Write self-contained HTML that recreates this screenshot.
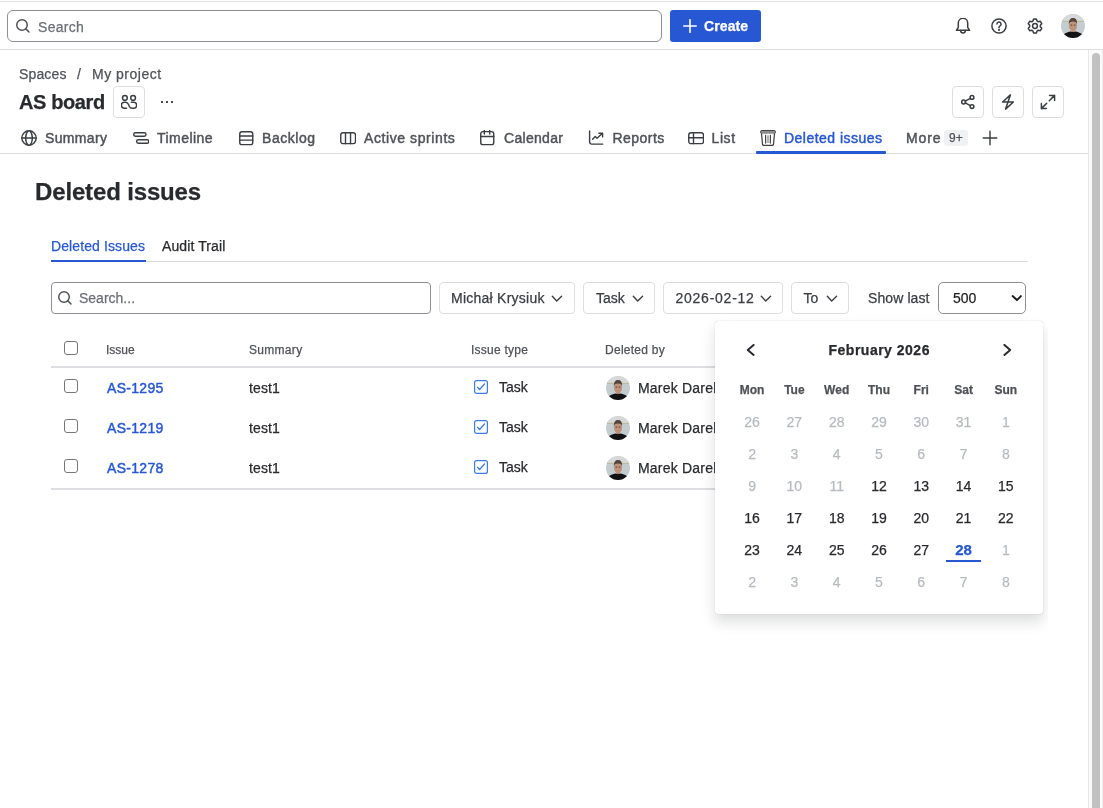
<!DOCTYPE html>
<html><head><meta charset="utf-8"><style>
html,body{margin:0;padding:0;background:#fff;width:1103px;height:808px;overflow:hidden;position:relative;font-family:"Liberation Sans", sans-serif}
.t{position:absolute;white-space:nowrap;font-family:"Liberation Sans", sans-serif}
svg{display:block}
</style></head><body>
<div id="root" style="position:absolute;left:0;top:0;width:1103px;height:808px;will-change:transform">
<div style="position:absolute;left:0px;top:1px;width:1103px;height:1px;background:#e1e3e1"></div>
<div style="position:absolute;left:0px;top:49px;width:1103px;height:1px;background:#dddee1"></div>
<div style="position:absolute;left:7px;top:10px;width:655px;height:32px;box-sizing:border-box;border:1px solid #8c8f97;border-radius:6px"></div>
<svg style="position:absolute;left:14px;top:17px;" width="16" height="16" viewBox="0 0 16 16" fill="none" stroke="#505258" stroke-width="1.5" stroke-linecap="round" stroke-linejoin="round"><circle cx="8" cy="8" r="5.25"/><path d="M11.9 11.9 L15 15"/></svg>
<div class="t" style="left:38px;top:16.0px;font-size:14px;line-height:22px;font-weight:400;color:#6b6e76;letter-spacing:0.3px;-webkit-text-stroke:0.25px #6b6e76;">Search</div>
<div style="position:absolute;left:670px;top:10px;width:91px;height:32px;background:#2857d4;border-radius:3px"></div>
<svg style="position:absolute;left:683px;top:19px;" width="14" height="14" viewBox="0 0 14 14" fill="none" stroke="#fff" stroke-width="1.6" stroke-linecap="round" stroke-linejoin="round"><path d="M7 0.75V13.25M0.75 7H13.25"/></svg>
<div class="t" style="left:704px;top:15.0px;font-size:14px;line-height:22px;font-weight:700;color:#fff;letter-spacing:0.1px;-webkit-text-stroke:0.25px #fff;">Create</div>
<svg style="position:absolute;left:955px;top:18px;" width="16" height="16" viewBox="0 0 16 16" fill="none" stroke="#3b3d42" stroke-width="1.5" stroke-linecap="round" stroke-linejoin="round"><path d="M3.3 9.4V5a4.7 4.7 0 0 1 9.4 0v4.4l1.9 2.9H1.4z"/><path d="M5.6 12.5a2.4 2.4 0 0 0 4.8 0"/></svg>
<svg style="position:absolute;left:991px;top:18px;" width="16" height="16" viewBox="0 0 16 16" fill="none" stroke="#3b3d42" stroke-width="1.5" stroke-linecap="round" stroke-linejoin="round"><circle cx="8" cy="8" r="7.1"/><path d="M5.9 6.1a2.1 2.1 0 1 1 3.1 1.85c-.6.35-1 .8-1 1.5v.4"/><circle cx="8" cy="11.9" r=".35" fill="#3b3d42"/></svg>
<svg style="position:absolute;left:1027px;top:18px;" width="16" height="16" viewBox="0 0 16 16" fill="none" stroke="#3b3d42" stroke-width="1.5" stroke-linecap="round" stroke-linejoin="round"><path d="M6.6 1h2.8l.7 2.1 1.1.65 2.15-.45 1.4 2.4-1.45 1.65v1.3l1.45 1.65-1.4 2.4-2.15-.45-1.1.65L9.4 15H6.6l-.7-2.1-1.1-.65-2.15.45-1.4-2.4L2.7 8.65v-1.3L1.25 5.7l1.4-2.4 2.15.45 1.1-.65z"/><circle cx="8" cy="8" r="2.4"/></svg>
<svg style="position:absolute;left:1061px;top:14px" width="24" height="24" viewBox="0 0 24 24">
<defs><clipPath id="ch"><circle cx="12" cy="12" r="12"/></clipPath></defs>
<g clip-path="url(#ch)">
<rect width="24" height="24" fill="#c3cdd0"/>
<rect width="24" height="7.3" fill="#d6d9d9"/>
<rect y="6.9" width="24" height="0.7" fill="#b8ab7e"/>
<path d="M1 24 C2 19.6 6 18.2 9.5 17.6 H14.5 C18 18.2 22 19.6 23 24Z" fill="#121214"/>
<rect x="10" y="15" width="4" height="3" fill="#b08671"/>
<ellipse cx="12" cy="11.7" rx="4.1" ry="5.4" fill="#bf927c"/>
<path d="M7.9 10.6 C7.5 5.6 9.8 4.1 12 4.1 C14.4 4.1 16.5 5.4 16.1 10.6 C15.6 8.1 14.2 7.5 12 7.5 C9.8 7.5 8.4 8.1 7.9 10.6Z" fill="#57443a"/>
<rect x="9.6" y="10.6" width="1.6" height=".9" fill="#4e3a30"/><rect x="12.8" y="10.6" width="1.6" height=".9" fill="#4e3a30"/>
</g></svg>
<div style="position:absolute;left:1088px;top:50px;width:1px;height:758px;background:#e8e8e8"></div>
<div style="position:absolute;left:1089px;top:50px;width:14px;height:758px;background:#fafafa"></div>
<div style="position:absolute;left:1102px;top:50px;width:1px;height:758px;background:#efefef"></div>
<div style="position:absolute;left:1092px;top:53px;width:8px;height:800px;background:#c1c1c1;border-radius:4px"></div>
<div class="t" style="left:19px;top:63.0px;font-size:14px;line-height:22px;font-weight:400;color:#505258;letter-spacing:0.15px;-webkit-text-stroke:0.25px #505258;">Spaces</div>
<div class="t" style="left:77px;top:63.0px;font-size:14px;line-height:22px;font-weight:400;color:#505258;letter-spacing:0px;-webkit-text-stroke:0.25px #505258;">/</div>
<div class="t" style="left:92px;top:63.0px;font-size:14px;line-height:22px;font-weight:400;color:#505258;letter-spacing:0.5px;-webkit-text-stroke:0.25px #505258;">My project</div>
<div class="t" style="left:19px;top:88.0px;font-size:20px;line-height:28px;font-weight:700;color:#292a2e;letter-spacing:-0.4px;-webkit-text-stroke:0.25px #292a2e;">AS board</div>
<div style="position:absolute;left:113px;top:86px;width:32px;height:32px;box-sizing:border-box;border:1px solid #dddee1;border-radius:4px"></div>
<svg style="position:absolute;left:121px;top:94px;" width="16" height="16" viewBox="0 0 16 16" fill="none" stroke="#3b3d42" stroke-width="1.5" stroke-linecap="round" stroke-linejoin="round"><circle cx="3.9" cy="3.9" r="2.35"/><circle cx="12.1" cy="3.9" r="2.35"/><path d="M5.5 14.25H3.3a2.95 2.95 0 0 1 0-5.9h1.2c1.5 0 2.4.7 3 2.1l.9 2c.55 1.2 1.3 1.8 2.6 1.8h1.7a2.95 2.95 0 0 0 0-5.9H10.4"/></svg>
<div style="position:absolute;left:161px;top:101px;width:2px;height:2px;background:#3b3d42;border-radius:.5px"></div>
<div style="position:absolute;left:166px;top:101px;width:2px;height:2px;background:#3b3d42;border-radius:.5px"></div>
<div style="position:absolute;left:171px;top:101px;width:2px;height:2px;background:#3b3d42;border-radius:.5px"></div>
<div style="position:absolute;left:952px;top:86px;width:32px;height:32px;box-sizing:border-box;border:1px solid #dddee1;border-radius:4px"></div>
<div style="position:absolute;left:992px;top:86px;width:32px;height:32px;box-sizing:border-box;border:1px solid #dddee1;border-radius:4px"></div>
<div style="position:absolute;left:1032px;top:86px;width:32px;height:32px;box-sizing:border-box;border:1px solid #dddee1;border-radius:4px"></div>
<svg style="position:absolute;left:960px;top:94px;" width="16" height="16" viewBox="0 0 16 16" fill="none" stroke="#3b3d42" stroke-width="1.5" stroke-linecap="round" stroke-linejoin="round"><circle cx="3.6" cy="8" r="1.9"/><circle cx="12" cy="3.4" r="1.9"/><circle cx="12" cy="12.6" r="1.9"/><path d="M5.3 7.05L10.3 4.35M5.3 8.95L10.3 11.65"/></svg>
<svg style="position:absolute;left:1000px;top:94px;" width="16" height="16" viewBox="0 0 16 16" fill="none" stroke="#3b3d42" stroke-width="1.5" stroke-linecap="round" stroke-linejoin="round"><path d="M10.4 0.9L2.6 8H13.4L5.6 15.1Z"/></svg>
<svg style="position:absolute;left:1040px;top:94px;" width="16" height="16" viewBox="0 0 16 16" fill="none" stroke="#3b3d42" stroke-width="1.5" stroke-linecap="round" stroke-linejoin="round"><path d="M9.6 1.4H14.6V6.4M14.6 1.4L9.3 6.7M6.4 14.6H1.4V9.6M1.4 14.6L6.7 9.3"/></svg>
<div style="position:absolute;left:0px;top:153px;width:1088px;height:1px;background:#dddee1"></div>
<svg style="position:absolute;left:21px;top:130px;" width="16" height="16" viewBox="0 0 16 16" fill="none" stroke="#3b3d42" stroke-width="1.4" stroke-linecap="round" stroke-linejoin="round"><circle cx="8" cy="8" r="7.2"/><path d="M7 0.9C3.9 4 3.9 12 7 15.1M9 0.9C12.1 4 12.1 12 9 15.1M0.8 8H15.2"/></svg>
<div class="t" style="left:45px;top:127.0px;font-size:14px;line-height:22px;font-weight:400;color:#505258;letter-spacing:0.35px;-webkit-text-stroke:0.45px #505258;">Summary</div>
<svg style="position:absolute;left:133px;top:130px;" width="16" height="16" viewBox="0 0 16 16" fill="none" stroke="#3b3d42" stroke-width="1.4" stroke-linecap="round" stroke-linejoin="round"><rect x="0.75" y="2.8" width="12.25" height="3.5" rx="1.75"/><rect x="3.6" y="9.8" width="12.25" height="3.5" rx="1.75"/></svg>
<div class="t" style="left:157px;top:127.0px;font-size:14px;line-height:22px;font-weight:400;color:#505258;letter-spacing:0.457px;-webkit-text-stroke:0.45px #505258;">Timeline</div>
<svg style="position:absolute;left:238px;top:130px;" width="16" height="16" viewBox="0 0 16 16" fill="none" stroke="#3b3d42" stroke-width="1.4" stroke-linecap="round" stroke-linejoin="round"><rect x="1.75" y="1.75" width="13" height="12.9" rx="2.2"/><path d="M1.75 6H14.75M1.75 10.1H14.75"/></svg>
<div class="t" style="left:262px;top:127.0px;font-size:14px;line-height:22px;font-weight:400;color:#505258;letter-spacing:0.55px;-webkit-text-stroke:0.45px #505258;">Backlog</div>
<svg style="position:absolute;left:340px;top:130px;" width="16" height="16" viewBox="0 0 16 16" fill="none" stroke="#3b3d42" stroke-width="1.4" stroke-linecap="round" stroke-linejoin="round"><rect x="0.75" y="2.75" width="14.75" height="10.9" rx="2.2"/><path d="M5.5 2.75V13.65M10.55 2.75V13.65"/></svg>
<div class="t" style="left:364px;top:127.0px;font-size:14px;line-height:22px;font-weight:400;color:#505258;letter-spacing:0.585px;-webkit-text-stroke:0.45px #505258;">Active sprints</div>
<svg style="position:absolute;left:479px;top:130px;" width="16" height="16" viewBox="0 0 16 16" fill="none" stroke="#3b3d42" stroke-width="1.4" stroke-linecap="round" stroke-linejoin="round"><rect x="1.75" y="1.6" width="13" height="13" rx="2.2"/><path d="M1.75 6.5H14.75M5.3 0.4V4.1M10.7 0.4V4.1"/></svg>
<div class="t" style="left:504px;top:127.0px;font-size:14px;line-height:22px;font-weight:400;color:#505258;letter-spacing:0.3px;-webkit-text-stroke:0.45px #505258;">Calendar</div>
<svg style="position:absolute;left:588px;top:130px;" width="16" height="16" viewBox="0 0 16 16" fill="none" stroke="#3b3d42" stroke-width="1.4" stroke-linecap="round" stroke-linejoin="round"><path d="M1.6 1V12.1a2 2 0 0 0 2 2H14.8"/><path d="M4.6 9.2L7.2 6.5L9 8.2L14 3.7M10.9 3.2H14.6V6.9"/></svg>
<div class="t" style="left:612.5px;top:127.0px;font-size:14px;line-height:22px;font-weight:400;color:#505258;letter-spacing:0.467px;-webkit-text-stroke:0.45px #505258;">Reports</div>
<svg style="position:absolute;left:688px;top:130px;" width="16" height="16" viewBox="0 0 16 16" fill="none" stroke="#3b3d42" stroke-width="1.4" stroke-linecap="round" stroke-linejoin="round"><rect x="0.75" y="2.75" width="14.75" height="10.9" rx="2.2"/><path d="M0.75 7.7H15.5M5.5 2.75V13.65"/></svg>
<div class="t" style="left:711.5px;top:127.0px;font-size:14px;line-height:22px;font-weight:400;color:#505258;letter-spacing:0.6px;-webkit-text-stroke:0.45px #505258;">List</div>
<svg style="position:absolute;left:760px;top:130px" width="16" height="16" viewBox="0 0 16 16">
<rect x="0.7" y="0.55" width="14.6" height="2.9" rx="0.7" fill="#939393" stroke="#404040" stroke-width="1"/>
<path d="M1.5 3.5 L2.5 14.2 Q2.7 15.4 3.8 15.4 H12.2 Q13.3 15.4 13.5 14.2 L14.5 3.5" fill="#fff" stroke="#404040" stroke-width="1.25"/>
<path d="M5.6 5.2 L5.7 13.1 M10.4 5.2 L10.3 13.1" stroke="#333" stroke-width="1.1" stroke-linecap="round"/>
<path d="M8 5.2 V13.1" stroke="#8a8a8a" stroke-width="1.3"/>
</svg>
<div class="t" style="left:784px;top:127.0px;font-size:14px;line-height:22px;font-weight:400;color:#2857d4;letter-spacing:0.477px;-webkit-text-stroke:0.45px #2857d4;">Deleted issues</div>
<div style="position:absolute;left:756px;top:151px;width:130px;height:3px;background:#2857d4;border-radius:1px"></div>
<div class="t" style="left:906px;top:127.0px;font-size:14px;line-height:22px;font-weight:400;color:#505258;letter-spacing:0.9px;-webkit-text-stroke:0.45px #505258;">More</div>
<div style="position:absolute;left:944px;top:130px;width:24px;height:16px;background:#f0f1f2;border-radius:3px"></div>
<div class="t" style="left:949px;top:128.0px;font-size:12px;line-height:20px;font-weight:400;color:#505258;letter-spacing:0.2px;-webkit-text-stroke:0.25px #505258;">9+</div>
<svg style="position:absolute;left:982px;top:130px;" width="16" height="16" viewBox="0 0 16 16" fill="none" stroke="#3b3d42" stroke-width="1.4" stroke-linecap="round" stroke-linejoin="round"><path d="M8 1.2V14.8M1.2 8H14.8"/></svg>
<div class="t" style="left:35px;top:175.5px;font-size:24px;line-height:32px;font-weight:700;color:#292a2e;letter-spacing:-0.15px;-webkit-text-stroke:0.25px #292a2e;">Deleted issues</div>
<div class="t" style="left:51px;top:235.0px;font-size:14px;line-height:22px;font-weight:400;color:#2857d4;letter-spacing:0.1px;-webkit-text-stroke:0.25px #2857d4;">Deleted Issues</div>
<div class="t" style="left:162px;top:235.0px;font-size:14px;line-height:22px;font-weight:400;color:#292a2e;letter-spacing:0.1px;-webkit-text-stroke:0.25px #292a2e;">Audit Trail</div>
<div style="position:absolute;left:51px;top:261px;width:977px;height:1px;background:#dddee1"></div>
<div style="position:absolute;left:51px;top:260px;width:95px;height:2px;background:#2857d4"></div>
<div style="position:absolute;left:51px;top:282px;width:380px;height:32px;box-sizing:border-box;border:1px solid #8c8f97;border-radius:4px"></div>
<svg style="position:absolute;left:56px;top:289px;" width="16" height="16" viewBox="0 0 16 16" fill="none" stroke="#505258" stroke-width="1.5" stroke-linecap="round" stroke-linejoin="round"><circle cx="8" cy="8" r="5.25"/><path d="M11.9 11.9 L15 15"/></svg>
<div class="t" style="left:79px;top:287.0px;font-size:14px;line-height:22px;font-weight:400;color:#6b6e76;letter-spacing:0px;-webkit-text-stroke:0.25px #6b6e76;">Search...</div>
<div style="position:absolute;left:439px;top:282px;width:136px;height:32px;box-sizing:border-box;border:1px solid #dddee1;border-radius:4px"></div>
<div class="t" style="left:451px;top:287.0px;font-size:14px;line-height:22px;font-weight:400;color:#3b3d42;letter-spacing:0.25px;-webkit-text-stroke:0.25px #3b3d42;">Michał Krysiuk</div>
<svg style="position:absolute;left:551.3px;top:290px;" width="12" height="12" viewBox="0 0 12 12" fill="none" stroke="#3b3d42" stroke-width="1.4" stroke-linecap="round" stroke-linejoin="round"><path d="M1.3 6.2L5.7 10.9L10.6 6.2"/></svg>
<div style="position:absolute;left:583px;top:282px;width:72px;height:32px;box-sizing:border-box;border:1px solid #dddee1;border-radius:4px"></div>
<div class="t" style="left:596px;top:287.0px;font-size:14px;line-height:22px;font-weight:400;color:#3b3d42;letter-spacing:0px;-webkit-text-stroke:0.25px #3b3d42;">Task</div>
<svg style="position:absolute;left:631.8px;top:290px;" width="12" height="12" viewBox="0 0 12 12" fill="none" stroke="#3b3d42" stroke-width="1.4" stroke-linecap="round" stroke-linejoin="round"><path d="M1.3 6.2L5.7 10.9L10.6 6.2"/></svg>
<div style="position:absolute;left:663px;top:282px;width:120px;height:32px;box-sizing:border-box;border:1px solid #dddee1;border-radius:4px"></div>
<div class="t" style="left:675.5px;top:287.0px;font-size:14px;line-height:22px;font-weight:400;color:#3b3d42;letter-spacing:0.75px;-webkit-text-stroke:0.25px #3b3d42;">2026-02-12</div>
<svg style="position:absolute;left:760px;top:290px;" width="12" height="12" viewBox="0 0 12 12" fill="none" stroke="#3b3d42" stroke-width="1.4" stroke-linecap="round" stroke-linejoin="round"><path d="M1.3 6.2L5.7 10.9L10.6 6.2"/></svg>
<div style="position:absolute;left:791px;top:282px;width:58px;height:32px;box-sizing:border-box;border:1px solid #dddee1;border-radius:4px"></div>
<div class="t" style="left:803.5px;top:287.0px;font-size:14px;line-height:22px;font-weight:400;color:#3b3d42;letter-spacing:0px;-webkit-text-stroke:0.25px #3b3d42;">To</div>
<svg style="position:absolute;left:825.9px;top:290px;" width="12" height="12" viewBox="0 0 12 12" fill="none" stroke="#3b3d42" stroke-width="1.4" stroke-linecap="round" stroke-linejoin="round"><path d="M1.3 6.2L5.7 10.9L10.6 6.2"/></svg>
<div class="t" style="left:868px;top:287.0px;font-size:14px;line-height:22px;font-weight:400;color:#3b3d42;letter-spacing:0.1px;-webkit-text-stroke:0.25px #3b3d42;">Show last</div>
<div style="position:absolute;left:938px;top:282px;width:88px;height:32px;box-sizing:border-box;border:1px solid #8c8f97;border-radius:5px"></div>
<div class="t" style="left:953px;top:287.0px;font-size:14px;line-height:22px;font-weight:400;color:#1f1f1f;letter-spacing:0px;-webkit-text-stroke:0.25px #1f1f1f;">500</div>
<svg style="position:absolute;left:1011px;top:290px;" width="12" height="12" viewBox="0 0 12 12" fill="none" stroke="#1f1f1f" stroke-width="2" stroke-linecap="round" stroke-linejoin="round"><path d="M1.6 6.1L5.9 10.1L9.9 6.1"/></svg>
<div style="position:absolute;left:64px;top:341px;width:14px;height:14px;box-sizing:border-box;border:1px solid #767676;border-radius:3px;background:#fff"></div>
<div class="t" style="left:106px;top:340.0px;font-size:12px;line-height:20px;font-weight:400;color:#505258;letter-spacing:0px;-webkit-text-stroke:0.25px #505258;">Issue</div>
<div class="t" style="left:249px;top:340.0px;font-size:12px;line-height:20px;font-weight:400;color:#505258;letter-spacing:0.3px;-webkit-text-stroke:0.25px #505258;">Summary</div>
<div class="t" style="left:471px;top:340.0px;font-size:12px;line-height:20px;font-weight:400;color:#505258;letter-spacing:0.25px;-webkit-text-stroke:0.25px #505258;">Issue type</div>
<div class="t" style="left:605px;top:340.0px;font-size:12px;line-height:20px;font-weight:400;color:#505258;letter-spacing:0.27px;-webkit-text-stroke:0.25px #505258;">Deleted by</div>
<div style="position:absolute;left:51px;top:366px;width:977px;height:2px;background:#dddee1"></div>
<div style="position:absolute;left:64px;top:379px;width:14px;height:14px;box-sizing:border-box;border:1px solid #767676;border-radius:3px;background:#fff"></div>
<div class="t" style="left:107px;top:377.0px;font-size:14px;line-height:22px;font-weight:400;color:#2857d4;letter-spacing:0.3px;-webkit-text-stroke:0.45px #2857d4;">AS-1295</div>
<div class="t" style="left:249px;top:377.0px;font-size:14px;line-height:22px;font-weight:400;color:#292a2e;letter-spacing:0.1px;-webkit-text-stroke:0.25px #292a2e;">test1</div>
<svg style="position:absolute;left:474px;top:380px;" width="14" height="14" viewBox="0 0 14 14" fill="none" stroke="#3d7be5" stroke-width="1.2" stroke-linecap="round" stroke-linejoin="round"><rect x="0.6" y="0.6" width="12.8" height="12.8" rx="2"/><path d="M3.4 7.2L5.6 9.5L10.5 4"/></svg>
<div class="t" style="left:499px;top:376.0px;font-size:14px;line-height:22px;font-weight:400;color:#292a2e;letter-spacing:0px;-webkit-text-stroke:0.25px #292a2e;">Task</div>
<svg style="position:absolute;left:606px;top:376px" width="24" height="24" viewBox="0 0 24 24">
<defs><clipPath id="cr0"><circle cx="12" cy="12" r="12"/></clipPath></defs>
<g clip-path="url(#cr0)">
<rect width="24" height="24" fill="#c3cdd0"/>
<rect width="24" height="7.3" fill="#d6d9d9"/>
<rect y="6.9" width="24" height="0.7" fill="#b8ab7e"/>
<path d="M1 24 C2 19.6 6 18.2 9.5 17.6 H14.5 C18 18.2 22 19.6 23 24Z" fill="#121214"/>
<rect x="10" y="15" width="4" height="3" fill="#b08671"/>
<ellipse cx="12" cy="11.7" rx="4.1" ry="5.4" fill="#bf927c"/>
<path d="M7.9 10.6 C7.5 5.6 9.8 4.1 12 4.1 C14.4 4.1 16.5 5.4 16.1 10.6 C15.6 8.1 14.2 7.5 12 7.5 C9.8 7.5 8.4 8.1 7.9 10.6Z" fill="#57443a"/>
<rect x="9.6" y="10.6" width="1.6" height=".9" fill="#4e3a30"/><rect x="12.8" y="10.6" width="1.6" height=".9" fill="#4e3a30"/>
</g></svg>
<div class="t" style="left:638px;top:377.0px;font-size:14px;line-height:22px;font-weight:400;color:#292a2e;letter-spacing:0.2px;-webkit-text-stroke:0.25px #292a2e;">Marek Darelski</div>
<div style="position:absolute;left:64px;top:419px;width:14px;height:14px;box-sizing:border-box;border:1px solid #767676;border-radius:3px;background:#fff"></div>
<div class="t" style="left:107px;top:417.0px;font-size:14px;line-height:22px;font-weight:400;color:#2857d4;letter-spacing:0.3px;-webkit-text-stroke:0.45px #2857d4;">AS-1219</div>
<div class="t" style="left:249px;top:417.0px;font-size:14px;line-height:22px;font-weight:400;color:#292a2e;letter-spacing:0.1px;-webkit-text-stroke:0.25px #292a2e;">test1</div>
<svg style="position:absolute;left:474px;top:420px;" width="14" height="14" viewBox="0 0 14 14" fill="none" stroke="#3d7be5" stroke-width="1.2" stroke-linecap="round" stroke-linejoin="round"><rect x="0.6" y="0.6" width="12.8" height="12.8" rx="2"/><path d="M3.4 7.2L5.6 9.5L10.5 4"/></svg>
<div class="t" style="left:499px;top:416.0px;font-size:14px;line-height:22px;font-weight:400;color:#292a2e;letter-spacing:0px;-webkit-text-stroke:0.25px #292a2e;">Task</div>
<svg style="position:absolute;left:606px;top:416px" width="24" height="24" viewBox="0 0 24 24">
<defs><clipPath id="cr1"><circle cx="12" cy="12" r="12"/></clipPath></defs>
<g clip-path="url(#cr1)">
<rect width="24" height="24" fill="#c3cdd0"/>
<rect width="24" height="7.3" fill="#d6d9d9"/>
<rect y="6.9" width="24" height="0.7" fill="#b8ab7e"/>
<path d="M1 24 C2 19.6 6 18.2 9.5 17.6 H14.5 C18 18.2 22 19.6 23 24Z" fill="#121214"/>
<rect x="10" y="15" width="4" height="3" fill="#b08671"/>
<ellipse cx="12" cy="11.7" rx="4.1" ry="5.4" fill="#bf927c"/>
<path d="M7.9 10.6 C7.5 5.6 9.8 4.1 12 4.1 C14.4 4.1 16.5 5.4 16.1 10.6 C15.6 8.1 14.2 7.5 12 7.5 C9.8 7.5 8.4 8.1 7.9 10.6Z" fill="#57443a"/>
<rect x="9.6" y="10.6" width="1.6" height=".9" fill="#4e3a30"/><rect x="12.8" y="10.6" width="1.6" height=".9" fill="#4e3a30"/>
</g></svg>
<div class="t" style="left:638px;top:417.0px;font-size:14px;line-height:22px;font-weight:400;color:#292a2e;letter-spacing:0.2px;-webkit-text-stroke:0.25px #292a2e;">Marek Darelski</div>
<div style="position:absolute;left:64px;top:459px;width:14px;height:14px;box-sizing:border-box;border:1px solid #767676;border-radius:3px;background:#fff"></div>
<div class="t" style="left:107px;top:457.0px;font-size:14px;line-height:22px;font-weight:400;color:#2857d4;letter-spacing:0.3px;-webkit-text-stroke:0.45px #2857d4;">AS-1278</div>
<div class="t" style="left:249px;top:457.0px;font-size:14px;line-height:22px;font-weight:400;color:#292a2e;letter-spacing:0.1px;-webkit-text-stroke:0.25px #292a2e;">test1</div>
<svg style="position:absolute;left:474px;top:460px;" width="14" height="14" viewBox="0 0 14 14" fill="none" stroke="#3d7be5" stroke-width="1.2" stroke-linecap="round" stroke-linejoin="round"><rect x="0.6" y="0.6" width="12.8" height="12.8" rx="2"/><path d="M3.4 7.2L5.6 9.5L10.5 4"/></svg>
<div class="t" style="left:499px;top:456.0px;font-size:14px;line-height:22px;font-weight:400;color:#292a2e;letter-spacing:0px;-webkit-text-stroke:0.25px #292a2e;">Task</div>
<svg style="position:absolute;left:606px;top:456px" width="24" height="24" viewBox="0 0 24 24">
<defs><clipPath id="cr2"><circle cx="12" cy="12" r="12"/></clipPath></defs>
<g clip-path="url(#cr2)">
<rect width="24" height="24" fill="#c3cdd0"/>
<rect width="24" height="7.3" fill="#d6d9d9"/>
<rect y="6.9" width="24" height="0.7" fill="#b8ab7e"/>
<path d="M1 24 C2 19.6 6 18.2 9.5 17.6 H14.5 C18 18.2 22 19.6 23 24Z" fill="#121214"/>
<rect x="10" y="15" width="4" height="3" fill="#b08671"/>
<ellipse cx="12" cy="11.7" rx="4.1" ry="5.4" fill="#bf927c"/>
<path d="M7.9 10.6 C7.5 5.6 9.8 4.1 12 4.1 C14.4 4.1 16.5 5.4 16.1 10.6 C15.6 8.1 14.2 7.5 12 7.5 C9.8 7.5 8.4 8.1 7.9 10.6Z" fill="#57443a"/>
<rect x="9.6" y="10.6" width="1.6" height=".9" fill="#4e3a30"/><rect x="12.8" y="10.6" width="1.6" height=".9" fill="#4e3a30"/>
</g></svg>
<div class="t" style="left:638px;top:457.0px;font-size:14px;line-height:22px;font-weight:400;color:#292a2e;letter-spacing:0.2px;-webkit-text-stroke:0.25px #292a2e;">Marek Darelski</div>
<div style="position:absolute;left:51px;top:488px;width:977px;height:2px;background:#dddee1"></div>
<div style="position:absolute;left:0;top:0;width:1048px;height:808px;overflow:hidden"><div style="position:absolute;left:715px;top:321px;width:328px;height:293px;background:#fff;border-radius:3px;box-shadow:0 8px 14px rgba(30,31,33,0.15),0 0 1px rgba(30,31,33,0.31)"></div></div>
<svg style="position:absolute;left:745px;top:344px;" width="12" height="12" viewBox="0 0 12 12" fill="none" stroke="#292a2e" stroke-width="2" stroke-linecap="round" stroke-linejoin="round"><path d="M9.4 0.6L3.6 5.6L9.4 10.6" transform="translate(-0.8,0.3) scale(1)"/></svg>
<div class="t" style="left:828.5px;top:339.0px;font-size:14px;line-height:22px;font-weight:700;color:#292a2e;letter-spacing:0.5px;-webkit-text-stroke:0.25px #292a2e;">February 2026</div>
<svg style="position:absolute;left:1001px;top:344px;" width="12" height="12" viewBox="0 0 12 12" fill="none" stroke="#292a2e" stroke-width="2" stroke-linecap="round" stroke-linejoin="round"><path d="M2.6 0.6L8.4 5.6L2.6 10.6" transform="translate(0.8,0.3)"/></svg>
<div class="t" style="left:722.1px;width:60px;text-align:center;top:380.0px;font-size:12px;line-height:20px;font-weight:700;color:#505258;letter-spacing:0px;-webkit-text-stroke:0.25px #505258;">Mon</div>
<div class="t" style="left:764.39px;width:60px;text-align:center;top:380.0px;font-size:12px;line-height:20px;font-weight:700;color:#505258;letter-spacing:0px;-webkit-text-stroke:0.25px #505258;">Tue</div>
<div class="t" style="left:806.6800000000001px;width:60px;text-align:center;top:380.0px;font-size:12px;line-height:20px;font-weight:700;color:#505258;letter-spacing:0px;-webkit-text-stroke:0.25px #505258;">Wed</div>
<div class="t" style="left:848.97px;width:60px;text-align:center;top:380.0px;font-size:12px;line-height:20px;font-weight:700;color:#505258;letter-spacing:0px;-webkit-text-stroke:0.25px #505258;">Thu</div>
<div class="t" style="left:891.26px;width:60px;text-align:center;top:380.0px;font-size:12px;line-height:20px;font-weight:700;color:#505258;letter-spacing:0px;-webkit-text-stroke:0.25px #505258;">Fri</div>
<div class="t" style="left:933.55px;width:60px;text-align:center;top:380.0px;font-size:12px;line-height:20px;font-weight:700;color:#505258;letter-spacing:0px;-webkit-text-stroke:0.25px #505258;">Sat</div>
<div class="t" style="left:975.84px;width:60px;text-align:center;top:380.0px;font-size:12px;line-height:20px;font-weight:700;color:#505258;letter-spacing:0px;-webkit-text-stroke:0.25px #505258;">Sun</div>
<div class="t" style="left:722.1px;width:60px;text-align:center;top:411.0px;font-size:14px;line-height:22px;font-weight:400;color:#b8bbc0;letter-spacing:0px;-webkit-text-stroke:0.25px #b8bbc0;">26</div>
<div class="t" style="left:764.39px;width:60px;text-align:center;top:411.0px;font-size:14px;line-height:22px;font-weight:400;color:#b8bbc0;letter-spacing:0px;-webkit-text-stroke:0.25px #b8bbc0;">27</div>
<div class="t" style="left:806.6800000000001px;width:60px;text-align:center;top:411.0px;font-size:14px;line-height:22px;font-weight:400;color:#b8bbc0;letter-spacing:0px;-webkit-text-stroke:0.25px #b8bbc0;">28</div>
<div class="t" style="left:848.97px;width:60px;text-align:center;top:411.0px;font-size:14px;line-height:22px;font-weight:400;color:#b8bbc0;letter-spacing:0px;-webkit-text-stroke:0.25px #b8bbc0;">29</div>
<div class="t" style="left:891.26px;width:60px;text-align:center;top:411.0px;font-size:14px;line-height:22px;font-weight:400;color:#b8bbc0;letter-spacing:0px;-webkit-text-stroke:0.25px #b8bbc0;">30</div>
<div class="t" style="left:933.55px;width:60px;text-align:center;top:411.0px;font-size:14px;line-height:22px;font-weight:400;color:#b8bbc0;letter-spacing:0px;-webkit-text-stroke:0.25px #b8bbc0;">31</div>
<div class="t" style="left:975.84px;width:60px;text-align:center;top:411.0px;font-size:14px;line-height:22px;font-weight:400;color:#b8bbc0;letter-spacing:0px;-webkit-text-stroke:0.25px #b8bbc0;">1</div>
<div class="t" style="left:722.1px;width:60px;text-align:center;top:443.0px;font-size:14px;line-height:22px;font-weight:400;color:#b8bbc0;letter-spacing:0px;-webkit-text-stroke:0.25px #b8bbc0;">2</div>
<div class="t" style="left:764.39px;width:60px;text-align:center;top:443.0px;font-size:14px;line-height:22px;font-weight:400;color:#b8bbc0;letter-spacing:0px;-webkit-text-stroke:0.25px #b8bbc0;">3</div>
<div class="t" style="left:806.6800000000001px;width:60px;text-align:center;top:443.0px;font-size:14px;line-height:22px;font-weight:400;color:#b8bbc0;letter-spacing:0px;-webkit-text-stroke:0.25px #b8bbc0;">4</div>
<div class="t" style="left:848.97px;width:60px;text-align:center;top:443.0px;font-size:14px;line-height:22px;font-weight:400;color:#b8bbc0;letter-spacing:0px;-webkit-text-stroke:0.25px #b8bbc0;">5</div>
<div class="t" style="left:891.26px;width:60px;text-align:center;top:443.0px;font-size:14px;line-height:22px;font-weight:400;color:#b8bbc0;letter-spacing:0px;-webkit-text-stroke:0.25px #b8bbc0;">6</div>
<div class="t" style="left:933.55px;width:60px;text-align:center;top:443.0px;font-size:14px;line-height:22px;font-weight:400;color:#b8bbc0;letter-spacing:0px;-webkit-text-stroke:0.25px #b8bbc0;">7</div>
<div class="t" style="left:975.84px;width:60px;text-align:center;top:443.0px;font-size:14px;line-height:22px;font-weight:400;color:#b8bbc0;letter-spacing:0px;-webkit-text-stroke:0.25px #b8bbc0;">8</div>
<div class="t" style="left:722.1px;width:60px;text-align:center;top:475.0px;font-size:14px;line-height:22px;font-weight:400;color:#b8bbc0;letter-spacing:0px;-webkit-text-stroke:0.25px #b8bbc0;">9</div>
<div class="t" style="left:764.39px;width:60px;text-align:center;top:475.0px;font-size:14px;line-height:22px;font-weight:400;color:#b8bbc0;letter-spacing:0px;-webkit-text-stroke:0.25px #b8bbc0;">10</div>
<div class="t" style="left:806.6800000000001px;width:60px;text-align:center;top:475.0px;font-size:14px;line-height:22px;font-weight:400;color:#b8bbc0;letter-spacing:0px;-webkit-text-stroke:0.25px #b8bbc0;">11</div>
<div class="t" style="left:848.97px;width:60px;text-align:center;top:475.0px;font-size:14px;line-height:22px;font-weight:400;color:#292a2e;letter-spacing:0px;-webkit-text-stroke:0.25px #292a2e;">12</div>
<div class="t" style="left:891.26px;width:60px;text-align:center;top:475.0px;font-size:14px;line-height:22px;font-weight:400;color:#292a2e;letter-spacing:0px;-webkit-text-stroke:0.25px #292a2e;">13</div>
<div class="t" style="left:933.55px;width:60px;text-align:center;top:475.0px;font-size:14px;line-height:22px;font-weight:400;color:#292a2e;letter-spacing:0px;-webkit-text-stroke:0.25px #292a2e;">14</div>
<div class="t" style="left:975.84px;width:60px;text-align:center;top:475.0px;font-size:14px;line-height:22px;font-weight:400;color:#292a2e;letter-spacing:0px;-webkit-text-stroke:0.25px #292a2e;">15</div>
<div class="t" style="left:722.1px;width:60px;text-align:center;top:507.0px;font-size:14px;line-height:22px;font-weight:400;color:#292a2e;letter-spacing:0px;-webkit-text-stroke:0.25px #292a2e;">16</div>
<div class="t" style="left:764.39px;width:60px;text-align:center;top:507.0px;font-size:14px;line-height:22px;font-weight:400;color:#292a2e;letter-spacing:0px;-webkit-text-stroke:0.25px #292a2e;">17</div>
<div class="t" style="left:806.6800000000001px;width:60px;text-align:center;top:507.0px;font-size:14px;line-height:22px;font-weight:400;color:#292a2e;letter-spacing:0px;-webkit-text-stroke:0.25px #292a2e;">18</div>
<div class="t" style="left:848.97px;width:60px;text-align:center;top:507.0px;font-size:14px;line-height:22px;font-weight:400;color:#292a2e;letter-spacing:0px;-webkit-text-stroke:0.25px #292a2e;">19</div>
<div class="t" style="left:891.26px;width:60px;text-align:center;top:507.0px;font-size:14px;line-height:22px;font-weight:400;color:#292a2e;letter-spacing:0px;-webkit-text-stroke:0.25px #292a2e;">20</div>
<div class="t" style="left:933.55px;width:60px;text-align:center;top:507.0px;font-size:14px;line-height:22px;font-weight:400;color:#292a2e;letter-spacing:0px;-webkit-text-stroke:0.25px #292a2e;">21</div>
<div class="t" style="left:975.84px;width:60px;text-align:center;top:507.0px;font-size:14px;line-height:22px;font-weight:400;color:#292a2e;letter-spacing:0px;-webkit-text-stroke:0.25px #292a2e;">22</div>
<div class="t" style="left:722.1px;width:60px;text-align:center;top:539.0px;font-size:14px;line-height:22px;font-weight:400;color:#292a2e;letter-spacing:0px;-webkit-text-stroke:0.25px #292a2e;">23</div>
<div class="t" style="left:764.39px;width:60px;text-align:center;top:539.0px;font-size:14px;line-height:22px;font-weight:400;color:#292a2e;letter-spacing:0px;-webkit-text-stroke:0.25px #292a2e;">24</div>
<div class="t" style="left:806.6800000000001px;width:60px;text-align:center;top:539.0px;font-size:14px;line-height:22px;font-weight:400;color:#292a2e;letter-spacing:0px;-webkit-text-stroke:0.25px #292a2e;">25</div>
<div class="t" style="left:848.97px;width:60px;text-align:center;top:539.0px;font-size:14px;line-height:22px;font-weight:400;color:#292a2e;letter-spacing:0px;-webkit-text-stroke:0.25px #292a2e;">26</div>
<div class="t" style="left:891.26px;width:60px;text-align:center;top:539.0px;font-size:14px;line-height:22px;font-weight:400;color:#292a2e;letter-spacing:0px;-webkit-text-stroke:0.25px #292a2e;">27</div>
<div class="t" style="left:933.55px;width:60px;text-align:center;top:538.0px;font-size:15px;line-height:23px;font-weight:700;color:#2857d4;letter-spacing:0px;-webkit-text-stroke:0.25px #2857d4;">28</div>
<div class="t" style="left:975.84px;width:60px;text-align:center;top:539.0px;font-size:14px;line-height:22px;font-weight:400;color:#b8bbc0;letter-spacing:0px;-webkit-text-stroke:0.25px #b8bbc0;">1</div>
<div class="t" style="left:722.1px;width:60px;text-align:center;top:571.0px;font-size:14px;line-height:22px;font-weight:400;color:#b8bbc0;letter-spacing:0px;-webkit-text-stroke:0.25px #b8bbc0;">2</div>
<div class="t" style="left:764.39px;width:60px;text-align:center;top:571.0px;font-size:14px;line-height:22px;font-weight:400;color:#b8bbc0;letter-spacing:0px;-webkit-text-stroke:0.25px #b8bbc0;">3</div>
<div class="t" style="left:806.6800000000001px;width:60px;text-align:center;top:571.0px;font-size:14px;line-height:22px;font-weight:400;color:#b8bbc0;letter-spacing:0px;-webkit-text-stroke:0.25px #b8bbc0;">4</div>
<div class="t" style="left:848.97px;width:60px;text-align:center;top:571.0px;font-size:14px;line-height:22px;font-weight:400;color:#b8bbc0;letter-spacing:0px;-webkit-text-stroke:0.25px #b8bbc0;">5</div>
<div class="t" style="left:891.26px;width:60px;text-align:center;top:571.0px;font-size:14px;line-height:22px;font-weight:400;color:#b8bbc0;letter-spacing:0px;-webkit-text-stroke:0.25px #b8bbc0;">6</div>
<div class="t" style="left:933.55px;width:60px;text-align:center;top:571.0px;font-size:14px;line-height:22px;font-weight:400;color:#b8bbc0;letter-spacing:0px;-webkit-text-stroke:0.25px #b8bbc0;">7</div>
<div class="t" style="left:975.84px;width:60px;text-align:center;top:571.0px;font-size:14px;line-height:22px;font-weight:400;color:#b8bbc0;letter-spacing:0px;-webkit-text-stroke:0.25px #b8bbc0;">8</div>
<div style="position:absolute;left:946px;top:560px;width:35px;height:2px;background:#2857d4"></div>
</div>
</body></html>
